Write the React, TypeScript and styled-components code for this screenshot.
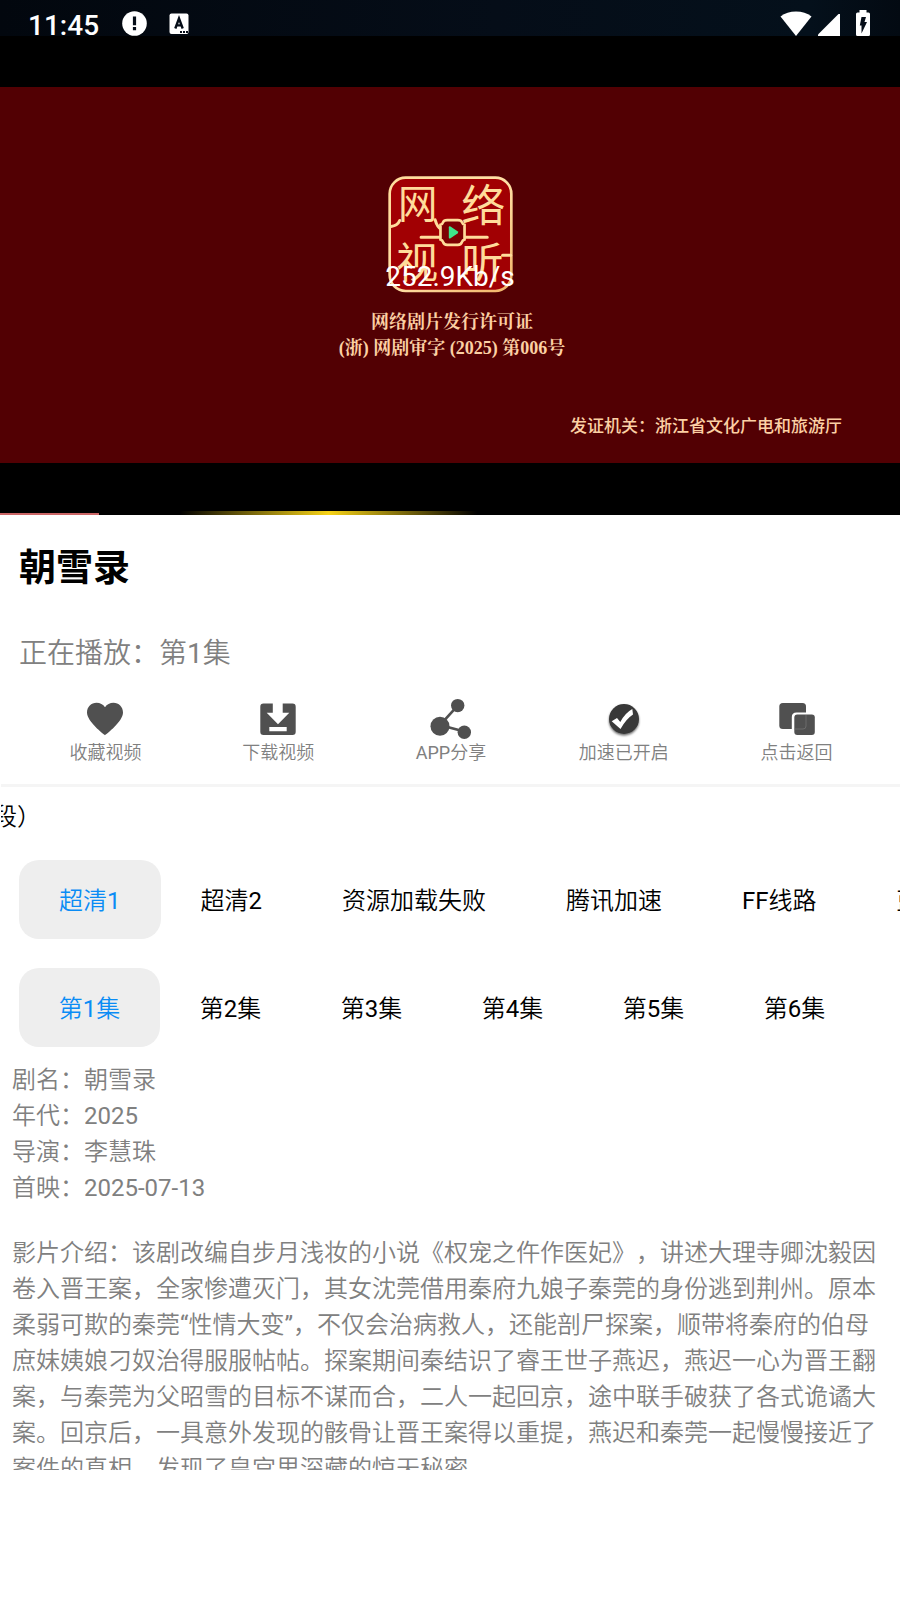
import React, { useState } from "react";
import styled, { createGlobalStyle } from "styled-components";

const GlobalStyle = createGlobalStyle`
  * { box-sizing: border-box; }
  body {
    margin: 0;
    background: #fff;
    font-family: Roboto, "Noto Sans CJK SC", sans-serif;
    text-spacing-trim: space-all;
  }
  button {
    margin: 0;
    padding: 0;
    border: 0;
    background: none;
    font: inherit;
    color: inherit;
    cursor: pointer;
  }
  h1, p, ul { margin: 0; padding: 0; font-weight: inherit; list-style: none; }
`;

const Page = styled.div`
  min-height: 100vh;
  overflow: hidden;
  font-weight: 350;
`;

const Latin = styled.span`
  font-weight: 400;
`;

const Player = styled.section`
  position: relative;
  background: #000;
  padding-bottom: 52px;
  font-weight: 400;
`;

const StatusBar = styled.header`
  display: flex;
  align-items: flex-end;
  justify-content: space-between;
  height: 36px;
  margin-bottom: 51px;
  padding: 0 30px 0 28px;
  overflow: hidden;
  color: #fff;
  background: linear-gradient(90deg, #02070e, #050d18 55%, #04101b 90%, #030a12);
`;

const StatusGroup = styled.div<{ $gap: number }>`
  display: flex;
  align-items: flex-end;
  gap: ${(p) => p.$gap}px;
  svg { display: block; }
`;

const Clock = styled.span`
  font-size: 28px;
  line-height: 20px;
  font-weight: 500;
`;

const Frame = styled.div`
  display: flex;
  flex-direction: column;
  align-items: center;
  height: 376px;
  padding-top: 88px;
  background: #520003;
  color: #fcd0a4;
`;

const License = styled.p`
  margin-top: 15px;
  padding-left: 4px;
  font-family: "Liberation Serif", "Noto Serif CJK SC", "Noto Sans CJK SC", serif;
  font-size: 18px;
  font-weight: 700;
  line-height: 26px;
  text-align: center;
  white-space: nowrap;
`;

const Issuer = styled.p`
  align-self: flex-end;
  margin-top: 53px;
  padding-right: 58px;
  font-size: 17px;
  font-weight: 500;
  line-height: 24px;
  white-space: nowrap;
`;

const Speed = styled.span`
  position: absolute;
  top: 261px;
  left: 0;
  right: 0;
  text-align: center;
  font-size: 28px;
  line-height: 32px;
  color: #fff;
`;

const Progress = styled.div`
  position: absolute;
  left: 0;
  bottom: 0;
  width: 11%;
  height: 2px;
  background: #cb6666;
`;

const Buffering = styled.div`
  position: absolute;
  left: 20%;
  bottom: 0;
  width: 33%;
  height: 4px;
  background: linear-gradient(90deg, transparent, #f7d318, transparent);
`;

const Title = styled.h1`
  padding: 27px 19px 0;
  font-size: 37px;
  font-weight: 700;
  line-height: 54px;
  color: #000;
`;

const NowPlaying = styled.p`
  padding: 38px 19px 0;
  font-size: 28px;
  line-height: 40px;
  color: #808080;
`;

const Actions = styled.div`
  display: grid;
  grid-template-columns: repeat(5, 1fr);
  margin-left: 1px;
  padding: 23px 17px 19px 18px;
  border-bottom: 3px solid #f5f5f5;
`;

const Action = styled.button`
  display: flex;
  flex-direction: column;
  align-items: center;
  font-size: 18px;
  line-height: 24px;
  color: #808080;
  svg { display: block; color: #505050; overflow: visible; }
`;

const Marquee = styled.div`
  margin-left: 1px;
  overflow: hidden;
  white-space: nowrap;
  font-size: 24px;
  line-height: 60px;
  text-indent: -8px;
  color: #000;
`;

const TabArea = styled.div`
  padding-top: 13px;
`;

const TabRow = styled.nav`
  display: flex;
  margin-bottom: 29px;
  padding-left: 19px;
  overflow: hidden;
`;

const Tab = styled.button<{ $active: boolean }>`
  flex: none;
  height: 79px;
  padding: 2px 40px 0;
  border-radius: 20px;
  font-size: 24px;
  line-height: 36px;
  white-space: nowrap;
  background: ${(p) => (p.$active ? "#eee" : "transparent")};
  color: ${(p) => (p.$active ? "#0a8cf5" : "#000")};
`;

const EpisodeTab = styled(Tab)`
  width: 141px;
  padding: 2px 0 0;
`;

const Details = styled.section`
  margin-top: -14px;
  padding: 0 12px;
  font-size: 24px;
  line-height: 36px;
  color: #808080;
`;

const Synopsis = styled.p`
  max-height: 235px;
  margin-top: 29px;
  overflow: hidden;
`;

/* Chinese text is set in a light weight; digits and Latin letters stay regular. */
const Mixed = ({ text }: { text: string }) => (
  <span>
    {text.split(/([A-Za-z0-9-]+|[“”])/).map((run, i) => (i % 2 ? <Latin key={i}>{run}</Latin> : run))}
  </span>
);

const Seal = () => (
  <svg width="127" height="119" viewBox="200 44 380 356" role="img" aria-label="网络视听">
    <defs>
      <linearGradient id="gold" x1="0" y1="0" x2="1" y2="1">
        <stop offset="0" stopColor="#ffdc9b" />
        <stop offset="0.5" stopColor="#ffe0a6" />
        <stop offset="1" stopColor="#f0b468" />
      </linearGradient>
    </defs>
    <rect x="208" y="52" width="364" height="339" rx="48" fill="#a10003" stroke="url(#gold)" strokeWidth="8" />
    <g fill="none" stroke="#ffdc9b" strokeWidth="9" strokeLinecap="round">
      <path d="M212 198C226 196 234 190 238 180" />
      <path d="M344 178C348 192 354 202 362 206" />
      <path d="M302 230H358M434 230H500" />
      <path d="M546 284H570" />
    </g>
    <g fill="#ffdc9b" fontFamily="Noto Sans CJK SC" fontWeight="400" textAnchor="middle">
      <text x="292" y="172" fontSize="118">网</text>
      <text x="488" y="186" fontSize="132">络</text>
      <text x="290" y="352" fontSize="126">视</text>
      <text x="486" y="352" fontSize="126">听</text>
    </g>
    <path
      d="M380 179H412Q422 179 424 185Q426 191 432 193V237Q426 239 424 245Q422 253 412 253H380Q370 253 368 245Q366 239 360 237V193Q366 191 368 185Q370 179 380 179Z"
      fill="#7d0003"
      stroke="#ffdc9b"
      strokeWidth="8"
    />
    <path d="M385 200Q385 196 390 198L411 212Q415 216 411 219L390 233Q385 235 385 231Z" fill="#3fe58c" />
  </svg>
);

const NoticeIcon = () => (
  <svg width="26" height="25" viewBox="0 0 26 25">
    <circle cx="13.500" cy="12.500" r="12.300" fill="#fff" />
    <path d="M11.900 5.500h3.200v8.700h-3.200zM11.900 16h3.200v3.200h-3.200z" fill="#050d18" />
  </svg>
);

const KeyboardIcon = () => (
  <svg width="20" height="23" viewBox="0 0 20 23">
    <rect x="0.500" y="0.500" width="19" height="20.500" rx="2" fill="#fff" />
    <path d="M6.300 15.500L10 5.500L13.700 15.500M7.600 12.400H12.400" fill="none" stroke="#050d18" strokeWidth="2.400" />
    <path d="M11 18h2v2h-2zM14 18h2v2h-2zM17 18h2v2h-2z" fill="#050d18" />
  </svg>
);

const WifiIcon = () => (
  <svg width="32" height="25" viewBox="0 0 32 25">
    <path d="M16 25L.5 5.500Q7 .5 16 .5T31.500 5.500Z" fill="#fff" />
  </svg>
);

const SignalIcon = () => (
  <svg width="22" height="22" viewBox="0 0 22 22">
    <path d="M22 0V22H0V20.500L20.500 0Z" fill="#fff" />
  </svg>
);

const BatteryIcon = () => (
  <svg width="14" height="26" viewBox="0 0 14 26">
    <path d="M3.500 0H10.500V2.500H12.500Q14 2.500 14 4V24.500Q14 26 12.500 26H1.500Q0 26 0 24.500V4Q0 2.500 1.500 2.500H3.500Z" fill="#fff" />
    <path d="M5.500 7H10L8.500 12H11L5.500 23.500V15.500H3.800Z" fill="#050d18" />
  </svg>
);

const HeartIcon = () => (
  <svg width="44" height="44" viewBox="0 0 44 44" fill="currentColor">
    <path d="M22 38.200C20.500 37 4 24.500 4 15.500C4 10 8.300 5.800 13.500 5.800C17 5.800 20.200 7.500 22 10.300C23.800 7.500 27 5.800 30.500 5.800C35.700 5.800 40 10 40 15.500C40 24.500 23.500 37 22 38.200Z" />
  </svg>
);

const DownloadIcon = () => (
  <svg width="44" height="44" viewBox="0 0 44 44" fill="currentColor" fillRule="evenodd">
    <path d="M7.500 6.500H16.800V15.700H10.700L22 27.300L33.300 15.700H26.700V6.500H36.500Q39.700 6.500 39.700 9.700V34.800Q39.700 38 36.500 38H7.500Q4.300 38 4.300 34.800V9.700Q4.300 6.500 7.500 6.500ZM13.300 30V34.300H30.700V30Z" />
  </svg>
);

const ShareIcon = () => (
  <svg width="44" height="44" viewBox="0 0 44 44" fill="currentColor">
    <path d="M28.700 8.600L11 28L35.300 34.500" fill="none" stroke="currentColor" strokeWidth="2.600" />
    <circle cx="28.700" cy="8.600" r="6.700" />
    <circle cx="11" cy="29.200" r="9.500" />
    <circle cx="35.300" cy="35.300" r="6.700" />
  </svg>
);

const BoostIcon = () => (
  <svg width="44" height="44" viewBox="0 0 44 44">
    <defs>
      <filter id="drop" x="-20%" y="-20%" width="150%" height="150%">
        <feDropShadow dx="0" dy="1.500" stdDeviation="1.200" floodOpacity="0.600" />
      </filter>
    </defs>
    <circle cx="22" cy="22" r="15" fill="#383838" filter="url(#drop)" />
    <path d="M9.700 24.300L15 21L18.300 25Q23 16 30.300 12L31 17.500Q24 22 18.500 32Z" fill="#fff" />
  </svg>
);

const BackIcon = () => (
  <svg width="44" height="44" viewBox="0 0 44 44" fill="currentColor">
    <rect x="4.300" y="6" width="26.700" height="26" rx="3.500" />
    <path d="M16.800 34V20Q16.800 15.500 21.500 15.500H33V34Z" fill="#fff" />
    <rect x="19.300" y="17.500" width="20.500" height="20.500" rx="3" />
    <path d="M31 18V29Q31 32 28 32H19.500" fill="none" stroke="#777" strokeWidth="0.700" />
  </svg>
);

const actions = [
  { label: "收藏视频", Icon: HeartIcon },
  { label: "下载视频", Icon: DownloadIcon },
  { label: "APP分享", Icon: ShareIcon },
  { label: "加速已开启", Icon: BoostIcon },
  { label: "点击返回", Icon: BackIcon },
];

const sources = ["超清1", "超清2", "资源加载失败", "腾讯加速", "FF线路", "蓝光"];
const episodes = ["第1集", "第2集", "第3集", "第4集", "第5集", "第6集"];
const facts = ["剧名：朝雪录", "年代：2025", "导演：李慧珠", "首映：2025-07-13"];

const synopsis =
  "影片介绍：该剧改编自步月浅妆的小说《权宠之仵作医妃》，讲述大理寺卿沈毅因卷入晋王案，全家惨遭灭门，其女沈莞借用秦府九娘子秦莞的身份逃到荆州。原本柔弱可欺的秦莞“性情大变”，不仅会治病救人，还能剖尸探案，顺带将秦府的伯母庶妹姨娘刁奴治得服服帖帖。探案期间秦结识了睿王世子燕迟，燕迟一心为晋王翻案，与秦莞为父昭雪的目标不谋而合，二人一起回京，途中联手破获了各式诡谲大案。回京后，一具意外发现的骸骨让晋王案得以重提，燕迟和秦莞一起慢慢接近了案件的真相，发现了皇宫里深藏的惊天秘密。";

export default function App() {
  const [source, setSource] = useState(0);
  const [episode, setEpisode] = useState(0);

  return (
    <Page lang="zh-CN">
      <GlobalStyle />
      <Player>
        <StatusBar>
          <StatusGroup $gap={22}>
            <Clock>11:45</Clock>
            <NoticeIcon />
            <KeyboardIcon />
          </StatusGroup>
          <StatusGroup $gap={6}>
            <WifiIcon />
            <StatusGroup $gap={16}>
              <SignalIcon />
              <BatteryIcon />
            </StatusGroup>
          </StatusGroup>
        </StatusBar>
        <Frame>
          <Seal />
          <License>
            网络剧片发行许可证
            <br />
            (浙) 网剧审字 (2025) 第006号
          </License>
          <Issuer>发证机关：浙江省文化广电和旅游厅</Issuer>
        </Frame>
        <Speed>252.9Kb/s</Speed>
        <Progress />
        <Buffering />
      </Player>

      <Title>朝雪录</Title>
      <NowPlaying>
        <Mixed text={`正在播放：${episodes[episode]}`} />
      </NowPlaying>

      <Actions>
        {actions.map(({ label, Icon }) => (
          <Action key={label} type="button">
            <Icon />
            <Mixed text={label} />
          </Action>
        ))}
      </Actions>

      <Marquee>段）</Marquee>

      <TabArea>
        <TabRow aria-label="线路">
          {sources.map((name, i) => (
            <Tab key={name} type="button" $active={i === source} onClick={() => setSource(i)}>
              <Mixed text={name} />
            </Tab>
          ))}
        </TabRow>
        <TabRow aria-label="选集">
          {episodes.map((name, i) => (
            <EpisodeTab key={name} type="button" $active={i === episode} onClick={() => setEpisode(i)}>
              <Mixed text={name} />
            </EpisodeTab>
          ))}
        </TabRow>
      </TabArea>

      <Details>
        <ul>
          {facts.map((fact) => (
            <li key={fact}>
              <Mixed text={fact} />
            </li>
          ))}
        </ul>
        <Synopsis>
          <Mixed text={synopsis} />
        </Synopsis>
      </Details>
    </Page>
  );
}
